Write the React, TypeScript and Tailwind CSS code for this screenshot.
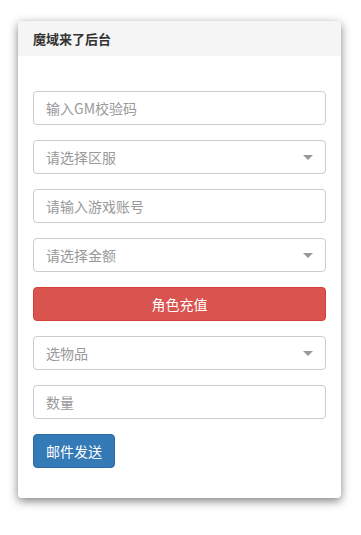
import React from "react";

const font = { fontFamily: '"Noto Sans CJK SC", "Liberation Sans", sans-serif' };

function Caret() {
  return (
    <svg width="10" height="5" viewBox="0 0 10 5" className="absolute right-[12px] top-[14px]">
      <path d="M0 0 L10 0 L5 5 Z" fill="#999" />
    </svg>
  );
}

function Field({ placeholder, select }: { placeholder: string; select?: boolean }) {
  return (
    <div className="relative h-[34px] rounded-[4px] border border-[#ccc] bg-white flex items-center px-3">
      <span className="text-[14px] text-[#999] leading-none">{placeholder}</span>
      {select && <Caret />}
    </div>
  );
}

export default function App() {
  return (
    <div className="w-[361px] h-[535px] bg-white pt-[21px] pl-[18px]" style={font}>
      <div className="w-[323px] rounded-[4px] bg-white shadow-[0_3px_10px_rgba(0,0,0,0.5)]">
        <div className="h-[35px] bg-[#f5f5f5] rounded-t-[4px] px-[15px] flex items-center">
          <span className="text-[13px] font-bold text-[#333]">魔域来了后台</span>
        </div>
        <div className="px-[15px] pt-[35px] pb-[30px] flex flex-col gap-[15px]">
          <Field placeholder="输入GM校验码" />
          <Field placeholder="请选择区服" select />
          <Field placeholder="请输入游戏账号" />
          <Field placeholder="请选择金额" select />
          <button className="h-[34px] rounded-[4px] bg-[#d9534f] border border-[#d43f3a] text-white text-[14px]">
            角色充值
          </button>
          <Field placeholder="选物品" select />
          <Field placeholder="数量" />
          <div>
            <button className="h-[34px] w-[82px] rounded-[4px] bg-[#337ab7] border border-[#2e6da4] text-white text-[14px]">
              邮件发送
            </button>
          </div>
        </div>
      </div>
    </div>
  );
}
